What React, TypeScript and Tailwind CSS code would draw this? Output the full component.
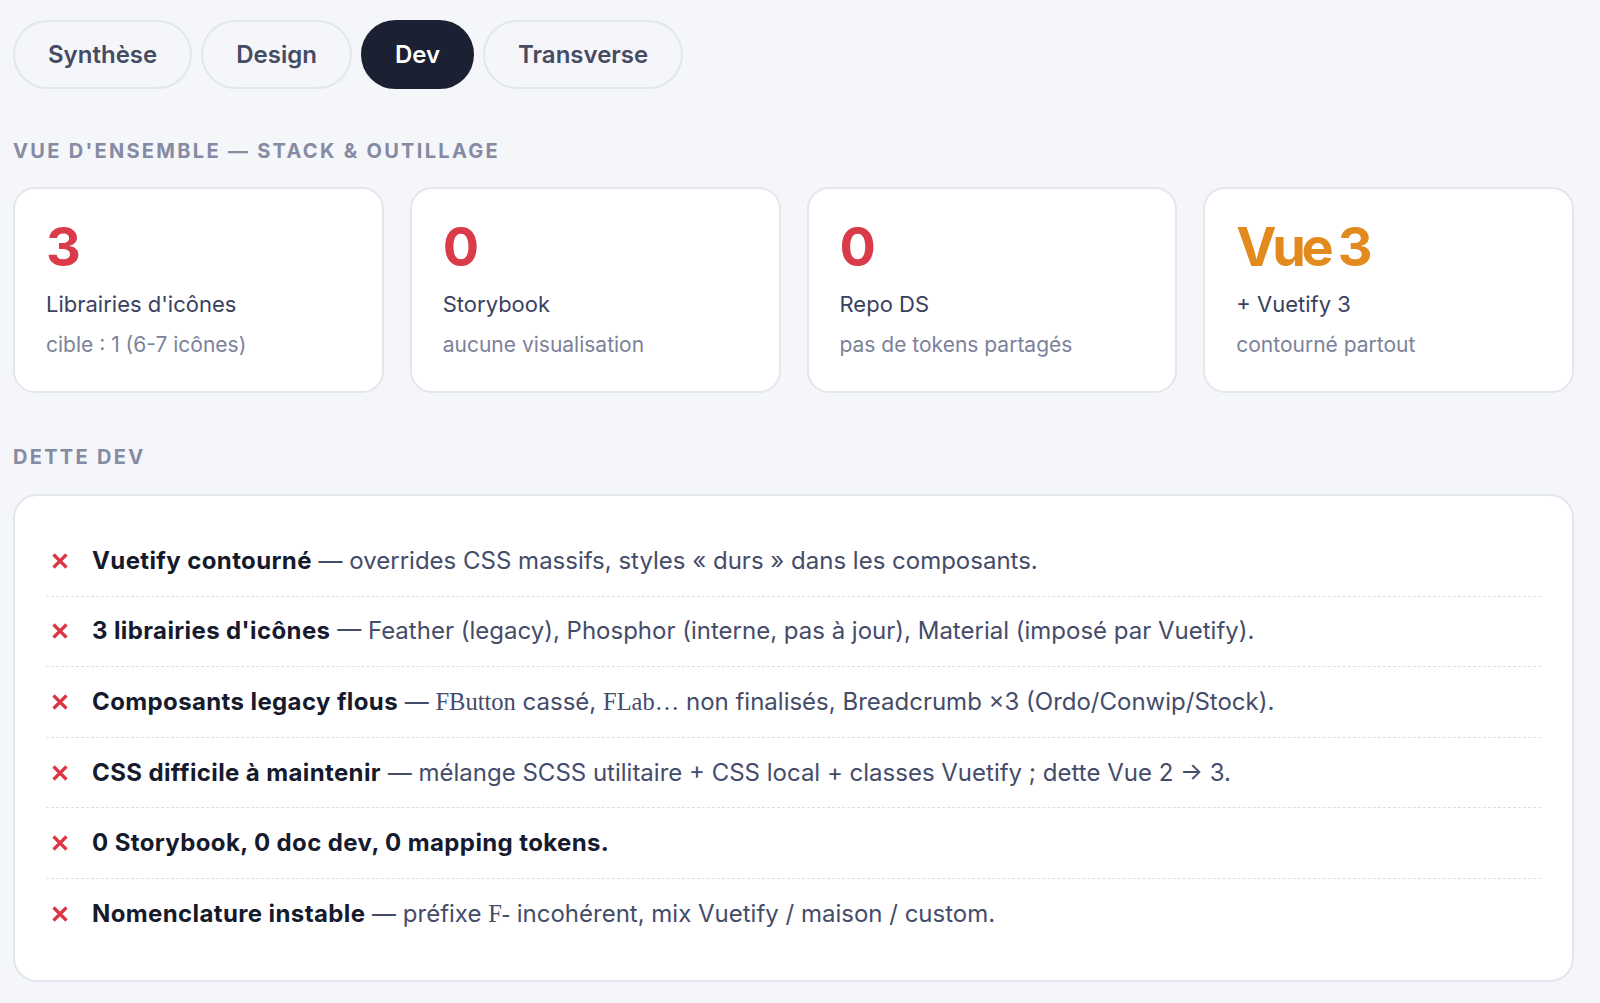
import React from 'react';

const tabs = ['Synthèse', 'Design', 'Dev', 'Transverse'];

const stats = [
  { value: '3', color: 'text-[#d93b48]', label: "Librairies d'icônes", sub: 'cible : 1 (6-7 icônes)' },
  { value: '0', color: 'text-[#d93b48]', label: 'Storybook', sub: 'aucune visualisation' },
  { value: '0', color: 'text-[#d93b48]', label: 'Repo DS', sub: 'pas de tokens partagés' },
  { value: 'Vue 3', color: 'text-[#e38a1e] tracking-[-0.08em]', label: '+ Vuetify 3', sub: 'contourné partout' },
];

const Code = ({ children }: { children: React.ReactNode }) => (
  <span className="font-['Liberation_Serif',serif] text-[24.5px]">{children}</span>
);

const debts: { title: string; rest?: React.ReactNode }[] = [
  { title: 'Vuetify contourné', rest: 'overrides CSS massifs, styles « durs » dans les composants.' },
  { title: "3 librairies d'icônes", rest: 'Feather (legacy), Phosphor (interne, pas à jour), Material (imposé par Vuetify).' },
  {
    title: 'Composants legacy flous',
    rest: (
      <>
        <Code>FButton</Code> cassé, <Code>FLab…</Code> non finalisés, Breadcrumb ×3 (Ordo/Conwip/Stock).
      </>
    ),
  },
  { title: 'CSS difficile à maintenir', rest: 'mélange SCSS utilitaire + CSS local + classes Vuetify ; dette Vue 2 → 3.' },
  { title: '0 Storybook, 0 doc dev, 0 mapping tokens.' },
  {
    title: 'Nomenclature instable',
    rest: (
      <>
        préfixe <Code>F-</Code> incohérent, mix Vuetify / maison / custom.
      </>
    ),
  },
];

function RedCross() {
  return (
    <svg width="18" height="18" viewBox="0 0 18 18" className="text-[#dc3545]">
      <path d="M2.5 2.5 L15.5 15.5 M15.5 2.5 L2.5 15.5" stroke="currentColor" strokeWidth="3.2" strokeLinecap="butt" />
    </svg>
  );
}

export default function App() {
  return (
    <div className="min-h-screen bg-[#f5f6fa] pl-[13px] pr-[26px] pt-[20px] pb-[23px] font-['Inter',sans-serif]">
      {/* Tabs */}
      <div className="flex gap-[9px]">
        {tabs.map((t) => (
          <button
            key={t}
            className={
              t === 'Dev'
                ? 'h-[69px] px-[32px] rounded-full border-2 border-[#1b2032] bg-[#1b2032] text-white text-[24px] font-semibold'
                : 'h-[69px] px-[33px] rounded-full border-2 border-[#e4e6ee] text-[#454b63] text-[24px] font-semibold'
            }
          >
            {t}
          </button>
        ))}
      </div>

      {/* Overview */}
      <h2 className="mt-[48px] text-[20px] leading-[28px] font-bold tracking-[0.115em] text-[#858ba2] uppercase">
        Vue d'ensemble — Stack &amp; outillage
      </h2>
      <div className="mt-[22px] grid grid-cols-4 gap-[26px]">
        {stats.map((s) => (
          <div key={s.label} className="bg-white border-2 border-[#e4e6ee] rounded-[22px] pl-[31px] pt-[31px] pb-[33px]">
            <div className={`text-[54px] leading-[54px] font-bold ${s.color}`}>{s.value}</div>
            <div className="mt-[16px] text-[22px] leading-[28px] text-[#3a4160]">{s.label}</div>
            <div className="mt-[14px] text-[21px] leading-[26px] text-[#7c8299]">{s.sub}</div>
          </div>
        ))}
      </div>

      {/* Debt */}
      <h2 className="mt-[50px] text-[20px] leading-[28px] font-bold tracking-[0.115em] text-[#858ba2] uppercase">
        Dette dev
      </h2>
      <div className="mt-[23px] bg-white border-2 border-[#e4e6ee] rounded-[24px] px-[31px] pt-[30px] pb-[31px]">
        {debts.map((d, i) => (
          <div
            key={d.title}
            className={`flex items-center py-[20.8px] ${i < debts.length - 1 ? 'border-b border-dashed border-[#dcdfe8]' : ''}`}
          >
            <span className="w-[27px] mr-[19px] flex justify-center">
              <RedCross />
            </span>
            <p className="text-[24px] leading-[28px] text-[#454c69]">
              <span className="font-bold tracking-[0.016em] text-[#151a2d]">{d.title}</span>
              {d.rest && <> — {d.rest}</>}
            </p>
          </div>
        ))}
      </div>
    </div>
  );
}
